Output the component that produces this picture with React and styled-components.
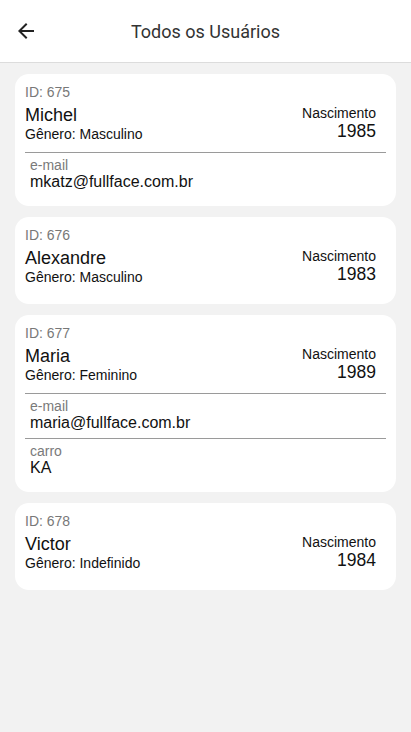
import React from "react";
import styled, { createGlobalStyle } from "styled-components";

const Global = createGlobalStyle`
  html, body { margin: 0; padding: 0; background: #f2f2f2; }
  body { font-family: "Liberation Sans", Arial, sans-serif; }
  * { box-sizing: border-box; }
`;

const Page = styled.div`
  min-height: 732px;
  background: #f2f2f2;
`;

const Header = styled.header`
  height: 63px;
  background: #fff;
  border-bottom: 1px solid #dcdcdc;
  display: grid;
  grid-template-columns: 56px 1fr 56px;
  align-items: center;
`;

const BackButton = styled.button`
  border: 0;
  background: transparent;
  padding: 0;
  margin-left: 14px;
  width: 24px;
  height: 24px;
  display: flex;
  color: #222;
  svg { display: block; }
`;

const Title = styled.h1`
  margin: 0;
  text-align: center;
  font-family: Roboto, "Liberation Sans", sans-serif;
  font-weight: 400;
  font-size: 18px;
  color: #333;
`;

const List = styled.main`
  display: flex;
  flex-direction: column;
  gap: 11px;
  padding: 11px 15px;
`;

const Card = styled.section`
  background: #fff;
  border-radius: 14px;
  padding: 10px 10px 9px;
`;

const Top = styled.div`
  padding-bottom: 10px;
`;

const Id = styled.div`
  font-size: 14px;
  line-height: 16px;
  color: #787878;
`;

const Row = styled.div`
  display: flex;
  justify-content: space-between;
  margin-top: 5px;
`;

const Name = styled.div`
  font-size: 18px;
  line-height: 21px;
  color: #111;
`;

const Small = styled.div`
  font-size: 14px;
  line-height: 16px;
  color: #111;
`;

const Birth = styled.div`
  text-align: right;
  padding-right: 10px;
`;

const Year = styled.div`
  font-size: 17.5px;
  line-height: 20px;
  color: #111;
`;

const Field = styled.div`
  border-top: 1px solid #9a9a9a;
  padding: 5px 5px 6px;
`;

const Label = styled.div`
  font-size: 14px;
  line-height: 15px;
  color: #7a7a7a;
`;

const Value = styled.div`
  font-size: 16px;
  line-height: 18px;
  color: #111;
`;

const users = [
  { id: 675, name: "Michel", genero: "Masculino", ano: 1985, fields: [["e-mail", "mkatz@fullface.com.br"]] },
  { id: 676, name: "Alexandre", genero: "Masculino", ano: 1983, fields: [] },
  {
    id: 677,
    name: "Maria",
    genero: "Feminino",
    ano: 1989,
    fields: [
      ["e-mail", "maria@fullface.com.br"],
      ["carro", "KA"],
    ],
  },
  { id: 678, name: "Victor", genero: "Indefinido", ano: 1984, fields: [] },
];

export default function App() {
  return (
    <Page>
      <Global />
      <Header>
        <BackButton aria-label="Voltar">
          <svg width="24" height="24" viewBox="0 0 24 24" fill="currentColor">
            <path d="M20 11H7.83l5.59-5.59L12 4l-8 8 8 8 1.41-1.41L7.83 13H20v-2z" />
          </svg>
        </BackButton>
        <Title>Todos os Usuários</Title>
        <span />
      </Header>
      <List>
        {users.map((u) => (
          <Card key={u.id}>
            <Top>
              <Id>ID: {u.id}</Id>
              <Row>
                <div>
                  <Name>{u.name}</Name>
                  <Small>Gênero: {u.genero}</Small>
                </div>
                <Birth>
                  <Small>Nascimento</Small>
                  <Year>{u.ano}</Year>
                </Birth>
              </Row>
            </Top>
            {u.fields.map(([l, v]) => (
              <Field key={l}>
                <Label>{l}</Label>
                <Value>{v}</Value>
              </Field>
            ))}
          </Card>
        ))}
      </List>
    </Page>
  );
}
